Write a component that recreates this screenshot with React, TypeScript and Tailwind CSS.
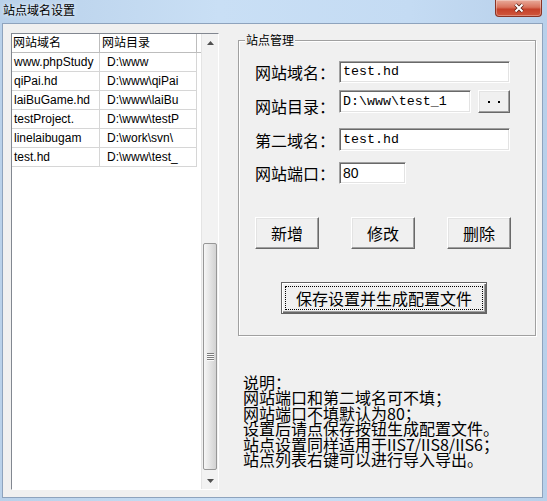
import React from 'react';

const sites: [string, string][] = [
  ['www.phpStudy', 'D:\\www'],
  ['qiPai.hd', 'D:\\www\\qiPai'],
  ['laiBuGame.hd', 'D:\\www\\laiBu'],
  ['testProject.', 'D:\\www\\testP'],
  ['linelaibugam', 'D:\\work\\svn\\'],
  ['test.hd', 'D:\\www\\test_'],
];

const notes = [
  '说明：',
  '网站端口和第二域名可不填；',
  '网站端口不填默认为80；',
  '设置后请点保存按钮生成配置文件。',
  '站点设置同样适用于IIS7/IIS8/IIS6；',
  '站点列表右键可以进行导入导出。',
];

function CloseButton() {
  return (
    <div className="mr-[1px] flex h-[17px] w-[47px] items-center justify-center rounded-b-[4px] border border-t-0 border-[#8a3324] bg-[linear-gradient(180deg,#e9ab9b_0%,#d9735d_45%,#c5412a_58%,#d0573d_100%)] shadow-[inset_0_0_0_1px_rgba(255,255,255,0.3)]">
      <svg width="12" height="10" viewBox="0 0 12 10">
        <path d="M2.5 1.5 L9.5 8.5 M9.5 1.5 L2.5 8.5" stroke="#5a2016" strokeWidth="3.6" />
        <path d="M2.5 1.5 L9.5 8.5 M9.5 1.5 L2.5 8.5" stroke="#fff" strokeWidth="2" />
      </svg>
    </div>
  );
}

function Arrow({ up }: { up?: boolean }) {
  return (
    <div className="flex h-[17px] items-center justify-center">
      <svg width="7" height="4" viewBox="0 0 7 4">
        <path d={up ? 'M3.5 0 L7 4 L0 4 Z' : 'M0 0 L7 0 L3.5 4 Z'} fill="#505050" />
      </svg>
    </div>
  );
}

function ScrollBar() {
  return (
    <div className="flex w-[17px] flex-col border-l border-[#e4e4e4] bg-[#f2f2f2]">
      <Arrow up />
      <div className="h-[192px]" />
      <div className="mx-[1px] flex h-[227px] items-center justify-center rounded-[2px] border border-[#979797] bg-[linear-gradient(90deg,#f6f6f6_0%,#e4e4e4_50%,#d2d2d2_100%)]">
        <div className="flex flex-col gap-[1px]">
          {[0, 1, 2, 3].map((i) => (
            <div key={i} className="h-[1px] w-[7px] bg-[#7c7c7c] shadow-[0_1px_0_#fafafa]" />
          ))}
        </div>
      </div>
      <div className="flex-1" />
      <Arrow />
    </div>
  );
}

function SiteList() {
  return (
    <div className="mt-[9px] ml-[8px] flex h-[457px] w-[208px] border border-t-[#828790] border-l-[#828790] border-r-white border-b-white bg-white font-['Liberation_Sans','Noto_Sans_CJK_SC',sans-serif] text-[12px] text-black">
      <div className="flex flex-1 flex-col">
        <div className="flex h-[19px] border-b border-[#bdbdbd]">
          <div className="w-[88px] border-r border-[#bdbdbd] pl-[1px] leading-[18px]">网站域名</div>
          <div className="w-[97px] border-r border-[#bdbdbd] pl-[2px] leading-[18px]">网站目录</div>
        </div>
        {sites.map(([name, dir]) => (
          <div key={name} className="flex h-[19px] w-[185px] border-b border-[#d6d6d6]">
            <div className="w-[88px] overflow-hidden whitespace-nowrap border-r border-[#d6d6d6] pl-[2px] leading-[18px]">{name}</div>
            <div className="w-[97px] overflow-hidden whitespace-nowrap border-r border-[#d6d6d6] pl-[7px] leading-[18px]">{dir}</div>
          </div>
        ))}
      </div>
      <ScrollBar />
    </div>
  );
}

const sunken =
  'border border-t-[#a0a0a0] border-l-[#a0a0a0] border-r-white border-b-white bg-white shadow-[inset_1px_1px_0_#696969,inset_-1px_-1px_0_#e3e3e3]';
const raised =
  'border border-t-white border-l-white border-r-[#696969] border-b-[#696969] bg-[#f0f0f0] shadow-[inset_-1px_-1px_0_#a0a0a0,inset_1px_1px_0_#e3e3e3]';

function Field({ value, w, mono = true }: { value: string; w: string; mono?: boolean }) {
  return (
    <div
      className={`${sunken} ${w} flex h-full items-center overflow-hidden whitespace-nowrap pl-[3px] ${
        mono ? "font-['Liberation_Mono',monospace] text-[13.3px]" : "font-['Liberation_Sans',sans-serif] text-[14px]"
      }`}
    >
      {value}
    </div>
  );
}

function Label({ children, extra = '' }: { children: React.ReactNode; extra?: string }) {
  return <div className={`w-[84px] leading-[16px] ${extra}`}>{children}</div>;
}

function SiteForm() {
  return (
    <div className="relative mt-[16px] h-[296px] w-[298px] border border-[#a0a0a0] shadow-[inset_1px_1px_0_#fff,1px_1px_0_#fff]">
      <span className="absolute -top-[8px] left-[6px] bg-[#f0f0f0] px-[1px] text-[12px] leading-[14px]">站点管理</span>
      <div className="flex flex-col pt-[20px] pl-[16px]">
        <div className="flex h-[22px] items-center">
          <Label>网站域名：</Label>
          <Field value="test.hd" w="w-[171px]" />
        </div>
        <div className="mt-[7px] flex h-[23px] items-center">
          <Label extra="pt-[9px]">网站目录：</Label>
          <Field value="D:\www\test_1" w="w-[132px]" />
          <div className={`${raised} ml-[7px] flex h-full w-[32px] items-center justify-center gap-[8px]`}>
            <span className="h-[2px] w-[2px] bg-black" />
            <span className="h-[2px] w-[2px] bg-black" />
          </div>
        </div>
        <div className="mt-[15px] flex h-[23px] items-center">
          <Label>第二域名：</Label>
          <Field value="test.hd" w="w-[171px]" />
        </div>
        <div className="mt-[11px] flex h-[22px] items-center">
          <Label>网站端口：</Label>
          <Field value="80" w="w-[67px]" mono={false} />
        </div>
        <div className="mt-[33px] flex h-[32px] gap-[32px] pl-[-1px]">
          {['新增', '修改', '删除'].map((t) => (
            <div key={t} className={`${raised} flex w-[64px] items-center justify-center`}>
              {t}
            </div>
          ))}
        </div>
        <div className="mt-[33px] ml-[26px] flex h-[32px] w-[206px] border border-[#646464] bg-[#f0f0f0] p-[3px] shadow-[inset_1px_1px_0_#fff,inset_-1px_-1px_0_#696969,inset_-2px_-2px_0_#a0a0a0]">
          <div className="flex flex-1 items-center justify-center border border-dotted border-black">保存设置并生成配置文件</div>
        </div>
      </div>
    </div>
  );
}

export default function App() {
  return (
    <div className="flex h-[501px] w-[547px] flex-col bg-[linear-gradient(90deg,#b9d1ea_0%,#c9dff5_40%,#c4dbf3_75%,#b8d0ea_100%)] pr-[4px] pb-[3px] pl-[2px] font-['Noto_Sans_CJK_SC',sans-serif] text-black">
      <div className="flex h-[23px] items-start justify-between">
        <span className="pt-[2px] pl-[1px] text-[12px] leading-[16px] [text-shadow:0_0_5px_#fff]">站点域名设置</span>
        <CloseButton />
      </div>
      <div className="flex flex-1 border border-[#8ea3bd] bg-[#f0f0f0] text-[16px]">
        <SiteList />
        <div className="ml-[19px] flex flex-col">
          <SiteForm />
          <div className="mt-[39px] ml-[5px] leading-[15.4px]">
            {notes.map((n) => (
              <div key={n}>{n}</div>
            ))}
          </div>
        </div>
      </div>
    </div>
  );
}
